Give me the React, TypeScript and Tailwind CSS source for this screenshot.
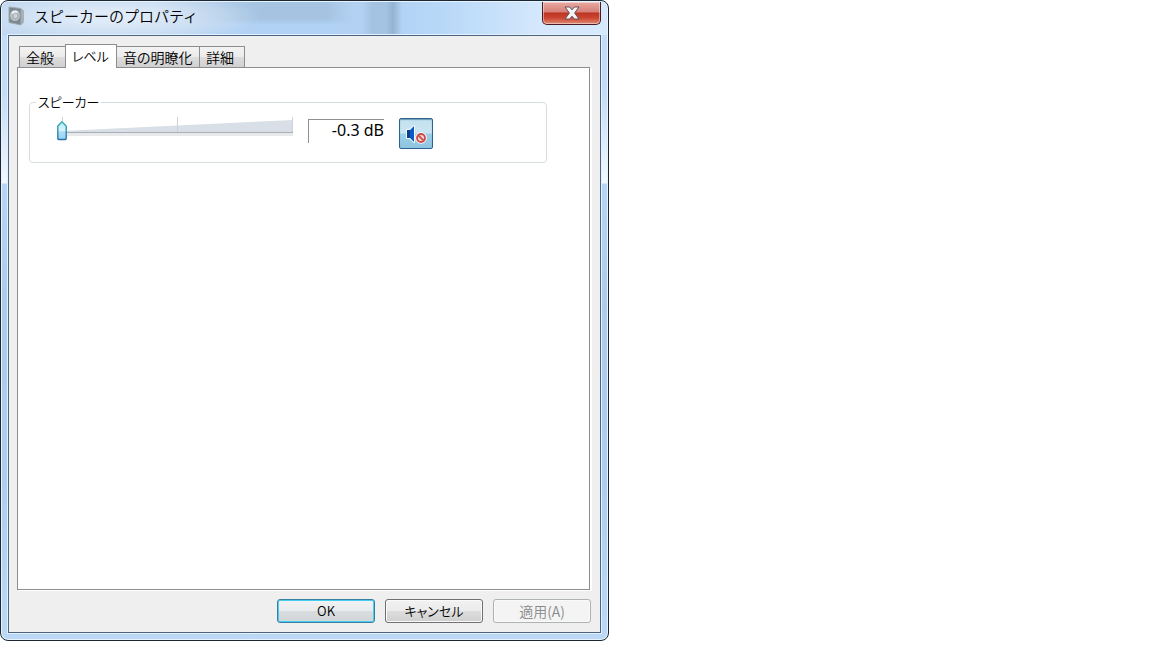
import { useState } from "react";

const tabs = [
  { id: "general", label: "全般", width: "w-[47px]" },
  { id: "levels", label: "レベル", width: "w-[52px]" },
  { id: "enhance", label: "音の明瞭化", width: "w-[84px]" },
  { id: "details", label: "詳細", width: "w-[46px]" },
];

function SpeakerIcon() {
  return (
    <svg width="18" height="20" viewBox="0 0 18 20" aria-hidden="true">
      <path d="M13 2.5l3 2v12L13 19z" fill="#a9b1b7" />
      <path d="M1 1l12 1.5V19L1 16.5z" fill="#7b8891" stroke="#a0a9af" strokeWidth="1" />
      <ellipse cx="7" cy="9.5" rx="5" ry="5.5" fill="#b9c0c5" />
      <path d="M3 7q3-4 7-1.5L7 9.5z" fill="#e9edef" />
      <ellipse cx="7.5" cy="10" rx="2.5" ry="2.8" fill="#cdd3d7" stroke="#8f999f" strokeWidth="0.7" />
    </svg>
  );
}

function CloseIcon() {
  return (
    <svg width="16" height="14" viewBox="0 0 16 14" aria-hidden="true">
      <path
        d="M1 1h4.6L8 3.8 10.4 1H15l-4.4 6 4.4 6h-4.6L8 10.2 5.6 13H1l4.4-6z"
        fill="#f4f4f4"
        stroke="#62505a"
        strokeWidth="1"
        strokeLinejoin="round"
      />
    </svg>
  );
}

function MutedIcon() {
  return (
    <svg width="22" height="20" viewBox="0 0 22 20" aria-hidden="true">
      <path d="M2 6h3l4-4v16l-4-4H2z" fill="#0c58c4" stroke="#f4fbff" strokeWidth="2" strokeLinejoin="round" />
      <path d="M2 6h3l4-4v16l-4-4H2z" fill="#0c58c4" />
      <path d="M2 6h3v8H2z" fill="#083f8e" />
      <circle cx="16" cy="14" r="5.8" fill="#fff" />
      <circle cx="16" cy="14" r="4" fill="#f3d5d3" stroke="#cb4b46" strokeWidth="1.8" />
      <path d="M13.3 11.3l5.4 5.4" stroke="#cb4b46" strokeWidth="1.8" />
    </svg>
  );
}

function VolumeSlider() {
  const [value, setValue] = useState(0);

  return (
    <div className="relative h-6 w-[237px]">
      <svg className="block" width="237" height="24" viewBox="0 0 237 24" aria-hidden="true">
        <path d="M5 14L236 3v12H5z" fill="#d8dfe6" />
        <path d="M5 0h1v4H5zM120 0h1v15h-1zM235 0h1v15h-1z" fill="#cdd2d6" />
        <path d="M5 15h231v1H5z" fill="#a9afb5" />
        <path d="M5 16h231v3H5z" fill="#e7e9ea" />
      </svg>
      <svg
        className="absolute top-1"
        style={{ left: `${(value / 100) * 226}px` }}
        width="11"
        height="20"
        viewBox="0 0 11 20"
        aria-hidden="true"
      >
        <defs>
          <linearGradient id="thumb" x1="0" y1="0" x2="0" y2="1">
            <stop offset="0" stopColor="#aef0f5" />
            <stop offset="0.5" stopColor="#d8f5fc" />
            <stop offset="0.55" stopColor="#aee0f8" />
            <stop offset="1" stopColor="#93d3f6" />
          </linearGradient>
          <linearGradient id="thumbEdge" x1="0" y1="0" x2="0" y2="1">
            <stop offset="0" stopColor="#3dacb8" />
            <stop offset="1" stopColor="#2f6f9f" />
          </linearGradient>
        </defs>
        <path d="M5 .8L.8 5v12.5q0 1 1 1h6.4q1 0 1-1V5z" fill="url(#thumb)" stroke="url(#thumbEdge)" strokeWidth="1.4" />
      </svg>
      <input
        type="range"
        min={0}
        max={100}
        value={value}
        onChange={(e) => setValue(Number(e.target.value))}
        aria-label="スピーカー"
        className="absolute inset-0 h-6 w-full appearance-none bg-transparent [&::-webkit-slider-thumb]:h-5 [&::-webkit-slider-thumb]:w-[11px] [&::-webkit-slider-thumb]:appearance-none"
      />
    </div>
  );
}

export default function App() {
  const [active, setActive] = useState("levels");

  return (
    <main className="min-h-screen bg-white font-['Noto_Sans_CJK_JP',sans-serif] font-[350] text-black">
      <section
        aria-labelledby="title"
        className="flex w-full max-w-[609px] flex-col overflow-hidden rounded-lg border border-[#1c2733] bg-[linear-gradient(180deg,#c4dcf5_0px,#c4dcf5_90px,#f2f8fe_182px,#b5d6f8_183px,#aecbed_300px,#aecdf0_480px,#bbd8f6_100%)] px-[7px] pb-[7px] shadow-[inset_0_0_0_1px_#e6f4ff]"
      >
        <header className="-mx-[6px] mt-px flex h-[33px] items-start rounded-t-md bg-[radial-gradient(ellipse_150px_26px_at_108px_15px,#dfebf8_20%,transparent_100%),linear-gradient(90deg,#bed6ef_0px,#bed6ef_150px,transparent_260px,transparent_384px,#94b2d2_391px,#b2d3f5_400px,#b8d8f8_440px,#d5e8fc_540px,#d5e8fc_100%),linear-gradient(90deg,transparent_325px,#b3d2f3_352px,#b3d2f3_360px,#a4c3e2_370px,#a4c3e2_100%),linear-gradient(180deg,#a6c4e2_17px,#b1d2f5_23px)]">
          <div className="flex grow items-center gap-2 pl-[6px] pt-[3px]">
            <SpeakerIcon />
            <h1 id="title" className="text-[15px] leading-[22px]">
              スピーカーのプロパティ
            </h1>
          </div>
          <button
            type="button"
            aria-label="閉じる"
            className="mr-[6px] flex h-[23px] w-[59px] items-center justify-center rounded-b-[5px] border border-t-0 border-[#491b25] bg-[linear-gradient(180deg,#e9aaa2_0%,#d68078_45%,#bd3524_50%,#ca4430_72%,#e18c75_100%)] shadow-[inset_0_0_0_1px_#ffffff70]"
          >
            <CloseIcon />
          </button>
        </header>

        <div className="border border-[#4e6480] bg-[#efefef] pb-[9px] pl-2 pr-[9px] pt-2 shadow-[0_0_0_1px_#e1f1ff]">
          <div role="tablist" className="relative flex h-[23px] items-end pl-[2px] leading-5 [font-feature-settings:'palt']">
            {tabs.map((tab, i) => (
              <button
                key={tab.id}
                id={`tab-${tab.id}`}
                type="button"
                role="tab"
                aria-selected={tab.id === active}
                aria-controls="panel"
                onClick={() => setActive(tab.id)}
                className={`${tab.width} ${i > 0 ? "-ml-px" : ""} whitespace-nowrap border border-b-0 border-[#8b8d92] pl-[6px] text-left ${
                  tab.id === active
                    ? "relative z-10 -mb-px h-6 bg-white pb-[2px] text-[13px]"
                    : "h-[21px] bg-[linear-gradient(180deg,#f3f3f3_0%,#ebebeb_48%,#dddddd_52%,#d0d0d0_100%)] text-sm"
                }`}
              >
                {tab.label}
              </button>
            ))}
          </div>

          <div
            id="panel"
            role="tabpanel"
            aria-labelledby={`tab-${active}`}
            className="mr-px min-h-[523px] border border-[#8b8d92] bg-white pl-[11px] pr-[42px] pt-[25px] shadow-[2px_1px_0_#fff]"
          >
            <fieldset className="h-[70px] rounded-[4px] border border-[#d5dddf]">
              <legend className="ml-[6px] px-[2px] text-[13px] leading-[18px] [font-feature-settings:'palt']">スピーカー</legend>
              <div className="flex items-start pl-[27px] pt-[6px]">
                <VolumeSlider />
                <input
                  type="text"
                  readOnly
                  value="-0.3 dB"
                  aria-label="音量"
                  className="ml-[14px] mt-[2px] h-6 w-[76px] border-l border-t border-[#909090] pb-[3px] text-right font-['Noto_Sans',sans-serif] text-base font-normal leading-5 outline-none"
                />
                <button
                  type="button"
                  aria-label="ミュート"
                  aria-pressed="true"
                  className="ml-[15px] mt-px flex h-[31px] w-[34px] items-center justify-center rounded-[2px] border border-[#2c628b] bg-[linear-gradient(180deg,#c3e0ee_0%,#cbe6f3_48%,#9fd0e9_52%,#8ec5e2_100%)] shadow-[inset_0_1px_1px_#6d9dba]"
                >
                  <MutedIcon />
                </button>
              </div>
            </fieldset>
          </div>

          <footer className="mt-[9px] flex justify-end gap-[10px] text-[13px] [font-feature-settings:'palt']">
            <button
              type="button"
              className="flex h-6 w-[98px] items-center justify-center rounded-[3px] border border-[#397f9f] bg-[linear-gradient(180deg,#f1f3f4_0%,#e9ebec_48%,#dadddf_52%,#cfd4d6_100%)] shadow-[inset_0_0_0_1px_#45cdf2]"
            >
              OK
            </button>
            <button
              type="button"
              className="flex h-6 w-[98px] items-center justify-center rounded-[3px] border border-[#707070] bg-[linear-gradient(180deg,#f2f2f2_0%,#ebebeb_48%,#dddddd_52%,#cfcfcf_100%)] shadow-[inset_0_0_0_1px_#fafafa]"
            >
              キャンセル
            </button>
            <button
              type="button"
              disabled
              className="flex h-6 w-[98px] items-center justify-center rounded-[3px] border border-[#adb2b5] bg-[#f4f4f4] text-sm text-[#8a8a8a] shadow-[inset_0_0_0_1px_#fafafa]"
            >
              適用(A)
            </button>
          </footer>
        </div>
      </section>
    </main>
  );
}
